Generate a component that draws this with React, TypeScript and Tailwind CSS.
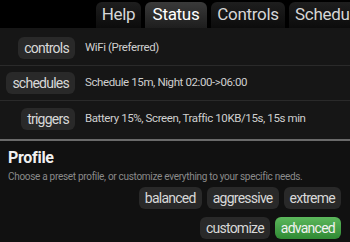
const tabs = [
  { label: "Help", w: "w-[45px]", active: false },
  { label: "Status", w: "w-[62px]", active: true },
  { label: "Controls", w: "w-[74px]", active: false },
  { label: "Schedules", w: "w-[80px]", active: false },
];

const rows = [
  { chip: "controls", value: "WiFi (Preferred)" },
  { chip: "schedules", value: "Schedule 15m, Night 02:00->06:00" },
  { chip: "triggers", value: "Battery 15%, Screen, Traffic 10KB/15s, 15s min" },
];

function Chip({ label, green }: { label: string; green?: boolean }) {
  return (
    <div
      className={`h-[22px] px-[6px] rounded-[6px] flex items-center text-[14px] tracking-[-0.75px] leading-none ${
        green
          ? "bg-gradient-to-b from-[#5cb85c] to-[#2f8a34] text-[#f2f2f2]"
          : "bg-[#292929] text-[#d8d8d8]"
      }`}
    >
      {label}
    </div>
  );
}

export default function App() {
  return (
    <div className="w-[350px] h-[242px] overflow-hidden bg-black font-['Roboto',sans-serif]">
      <div className="h-[28px] flex items-end gap-[4px] pl-[96px] whitespace-nowrap">
        {tabs.map((t) => (
          <div
            key={t.label}
            className={`${t.w} shrink-0 h-[26px] rounded-t-[6px] flex items-center text-[17px] tracking-[-0.3px] ${
              t.active
                ? "bg-gradient-to-b from-[#3a3a3a] to-[#1e1e1e] text-white"
                : "bg-gradient-to-b from-[#1e1e1e] to-[#0c0c0c] text-[#d6d6d6]"
            } ${t.label === "Schedules" ? "justify-start pl-[6px]" : "justify-center"}`}
          >
            {t.label}
          </div>
        ))}
      </div>
      <div className="bg-[#161616] pt-[3px]">
        {rows.map((r, i) => (
          <div
            key={r.chip}
            className={`h-[35px] flex items-center ${i < 2 ? "border-b border-[#2a2a2a]" : ""}`}
          >
            <div className="w-[75px] shrink-0 flex justify-end">
              <Chip label={r.chip} />
            </div>
            <div className="ml-[10px] text-[11.5px] tracking-[-0.4px] text-[#cfcfcf] whitespace-nowrap">
              {r.value}
            </div>
          </div>
        ))}
        <div className="h-[3px]" />
      </div>
      <div className="h-[2px] bg-[#6a6a6a]" />
      <div className="bg-[#111111] px-[8px] pt-[8px] h-[101px]">
        <div className="text-[16px] font-bold tracking-[-0.3px] text-[#f0f0f0] leading-[18px]">Profile</div>
        <div className="text-[10px] tracking-[-0.3px] text-[#8a8a8a] leading-[12px] mt-[4px] whitespace-nowrap">
          Choose a preset profile, or customize everything to your specific needs.
        </div>
        <div className="flex flex-col items-end gap-[8px] mt-[4px] pr-[1px]">
          <div className="flex gap-[5px]">
            <Chip label="balanced" />
            <Chip label="aggressive" />
            <Chip label="extreme" />
          </div>
          <div className="flex gap-[5px]">
            <Chip label="customize" />
            <Chip label="advanced" green />
          </div>
        </div>
      </div>
    </div>
  );
}
